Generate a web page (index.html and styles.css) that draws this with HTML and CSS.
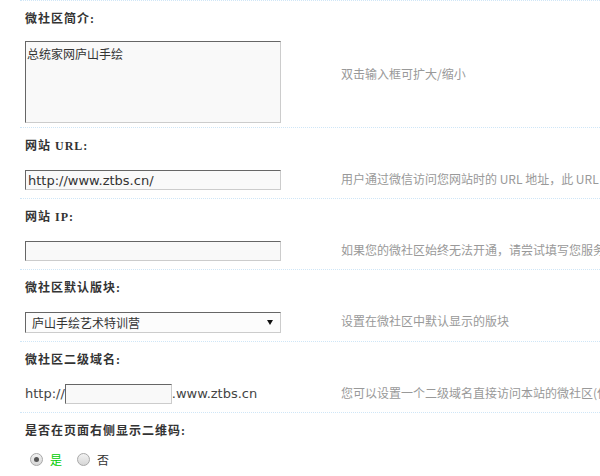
FILE: index.html
```html
<!DOCTYPE html>
<html lang="zh-CN">
<head>
<meta charset="utf-8">
<title>微社区设置</title>
<link rel="stylesheet" href="styles.css">
</head>
<body>
<div class="form">
  <div class="setting">
    <div class="label">微社区简介:</div>
    <div class="row row-intro">
      <div class="field"><textarea class="textarea">总统家网庐山手绘</textarea></div>
      <div class="tip tip-intro">双击输入框可扩大/缩小</div>
    </div>
  </div>
  <div class="setting">
    <div class="label">网站 URL:</div>
    <div class="row">
      <div class="field"><input class="input" type="text" value="http://www.ztbs.cn/"></div>
      <div class="tip">用户通过微信访问您网站时的 URL 地址，此 URL 地址必须是您的网站首页地址</div>
    </div>
  </div>
  <div class="setting">
    <div class="label">网站 IP:</div>
    <div class="row">
      <div class="field"><input class="input" type="text" value=""></div>
      <div class="tip">如果您的微社区始终无法开通，请尝试填写您服务器的 IP 地址</div>
    </div>
  </div>
  <div class="setting">
    <div class="label">微社区默认版块:</div>
    <div class="row row-select">
      <div class="field">
        <div class="select"><span class="select-text">庐山手绘艺术特训营</span><span class="select-arrow"></span></div>
      </div>
      <div class="tip">设置在微社区中默认显示的版块</div>
    </div>
  </div>
  <div class="setting">
    <div class="label">微社区二级域名:</div>
    <div class="row">
      <div class="field domain">
        <span class="domain-text">http://</span><input class="input input-short" type="text" value=""><span class="domain-text">.www.ztbs.cn</span>
      </div>
      <div class="tip">您可以设置一个二级域名直接访问本站的微社区(仅支持独立域名)</div>
    </div>
  </div>
  <div class="setting setting-last">
    <div class="label">是否在页面右侧显示二维码:</div>
    <div class="row row-radio">
      <label class="choice choice-yes"><span class="radio checked"></span>是</label>
      <label class="choice"><span class="radio"></span>否</label>
    </div>
  </div>
</div>
</body>
</html>
```
FILE: styles.css
```css
html, body {
  margin: 0;
  padding: 0;
  background: #fff;
  overflow: hidden;
}

body {
  width: 600px;
  height: 476px;
  font-family: "Noto Sans CJK SC", sans-serif;
  font-size: 12px;
  line-height: 20px;
  color: #333;
}

.form {
  margin-left: 20px;
  border-top: 1px dotted #cfe6f7;
}

.setting {
  border-bottom: 1px dotted #cfe6f7;
}

.setting-last {
  border-bottom: none;
}

.label {
  height: 20px;
  padding: 8px 0 6px 5px;
  line-height: 20px;
  font-family: "Liberation Serif", "Noto Sans CJK SC", serif;
  font-weight: bold;
  letter-spacing: 1px;
  color: #333;
}

.row {
  display: flex;
  align-items: center;
  height: 20px;
  padding: 8px 0 8px 5px;
}

.row-intro {
  height: 82px;
  padding-top: 6px;
  padding-bottom: 4px;
}

.row-select {
  height: 21px;
}

.field {
  flex: none;
  width: 316px;
  display: flex;
  align-items: center;
}

.tip {
  color: #999;
  white-space: nowrap;
  height: 20px;
  margin-top: -3px;
}

.tip-intro {
  margin-top: -16px;
}

.textarea {
  display: block;
  box-sizing: border-box;
  width: 256px;
  height: 82px;
  margin: 0;
  padding: 2px 1px;
  border: 1px solid #ccc;
  border-top-color: #666;
  border-left-color: #666;
  background: #f9f9f9;
  font-family: "Noto Sans CJK SC", sans-serif;
  font-size: 12px;
  line-height: 20px;
  color: #333;
  resize: none;
  outline: none;
}

.input {
  display: block;
  box-sizing: border-box;
  width: 256px;
  height: 20px;
  margin: 0;
  padding: 0 2px;
  border: 1px solid #ccc;
  border-top-color: #666;
  border-left-color: #666;
  background: #f9f9f9;
  font-family: "DejaVu Sans", sans-serif;
  font-size: 13px;
  color: #333;
  outline: none;
}

.input-short {
  width: 107px;
}

.domain-text {
  font-family: "DejaVu Sans", sans-serif;
  font-size: 13px;
  color: #444;
}

.select {
  box-sizing: border-box;
  width: 256px;
  height: 21px;
  padding: 0 7px 0 6px;
  border: 1px solid #ccc;
  border-top-color: #666;
  border-left-color: #666;
  background: #fcfcfc;
  display: flex;
  align-items: center;
  justify-content: space-between;
  color: #333;
}

.select-arrow {
  width: 0;
  height: 0;
  border-left: 3px solid transparent;
  border-right: 3px solid transparent;
  border-top: 5px solid #111;
}

.row-radio {
  height: 13px;
  padding-top: 6px;
  padding-left: 10px;
  gap: 15px;
}

.choice {
  display: flex;
  align-items: center;
  gap: 7px;
  color: #333;
}

.choice-yes {
  color: #00cc00;
}

.radio {
  box-sizing: border-box;
  width: 13px;
  height: 13px;
  border-radius: 50%;
  border: 1px solid #a8a8a8;
  background: linear-gradient(#f2f2f2, #d6d6d6);
  display: flex;
  align-items: center;
  justify-content: center;
}

.radio.checked::after {
  content: "";
  width: 5px;
  height: 5px;
  border-radius: 50%;
  background: #555;
}
```
